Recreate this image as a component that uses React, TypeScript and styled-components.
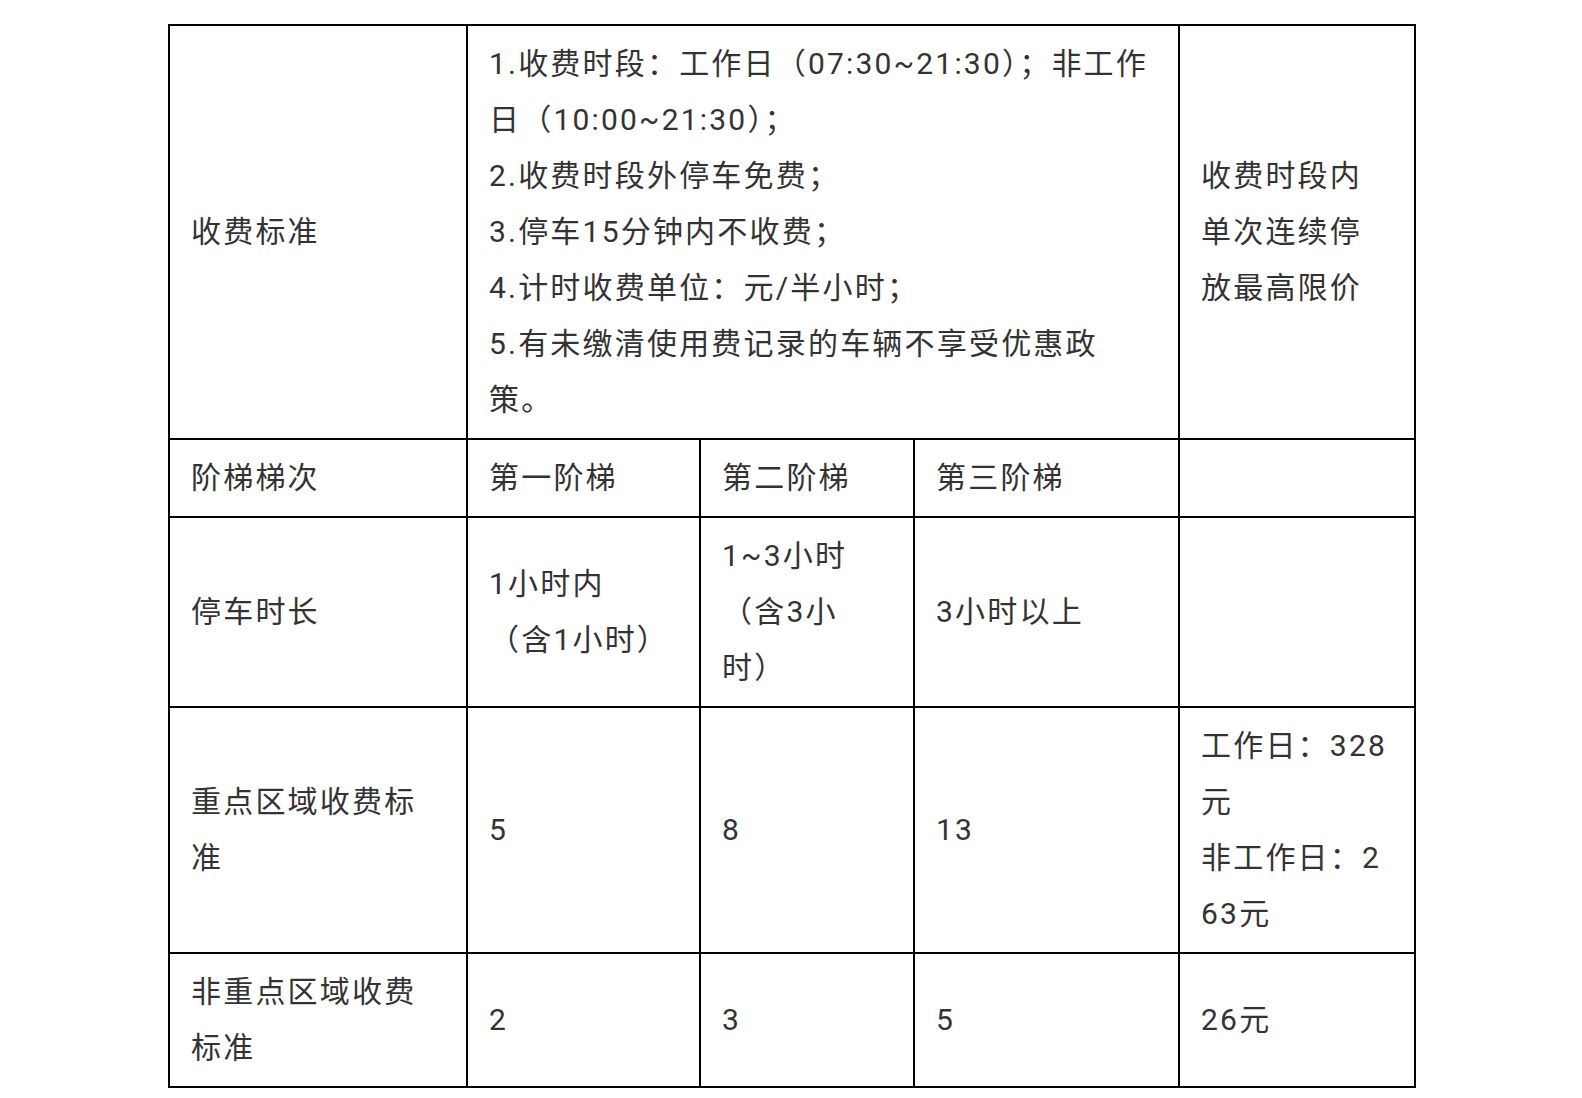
import styled, { createGlobalStyle } from 'styled-components';

const GlobalStyle = createGlobalStyle`
  html, body {
    margin: 0;
    padding: 0;
    background: #ffffff;
  }
  body {
    font-family: Roboto, "Noto Sans CJK SC", sans-serif;
    color: #333333;
  }
`;

const Page = styled.div`
  padding: 24px 0 20px 168px;
`;

const FeeTable = styled.table`
  border-collapse: collapse;
  table-layout: fixed;
  font-size: 30px;
  line-height: 56px;
  letter-spacing: 2.2px;
  word-break: break-all;
`;

const Cell = styled.td`
  border: 2px solid #000000;
  padding: 10px 22px 10px 21px;
  vertical-align: middle;
  text-align: left;
  color: #333333;
`;

const Item = styled.div`
  display: block;
`;

const RULES = [
  '1.收费时段：工作日（07:30~21:30）；非工作日（10:00~21:30）；',
  '2.收费时段外停车免费；',
  '3.停车15分钟内不收费；',
  '4.计时收费单位：元/半小时；',
  '5.有未缴清使用费记录的车辆不享受优惠政策。',
];

const COLUMNS = [298, 233, 214, 265, 236];

export default function App() {
  return (
    <>
      <GlobalStyle />
      <Page>
        <FeeTable style={{ width: COLUMNS.reduce((a, b) => a + b, 0) }}>
          <colgroup>
            {COLUMNS.map((w, i) => (
              <col key={i} style={{ width: w }} />
            ))}
          </colgroup>
          <tbody>
            <tr>
              <Cell>收费标准</Cell>
              <Cell colSpan={3}>
                {RULES.map((r, i) => (
                  <Item key={i}>{r}</Item>
                ))}
              </Cell>
              <Cell>收费时段内单次连续停放最高限价</Cell>
            </tr>
            <tr>
              <Cell>阶梯梯次</Cell>
              <Cell>第一阶梯</Cell>
              <Cell>第二阶梯</Cell>
              <Cell>第三阶梯</Cell>
              <Cell />
            </tr>
            <tr>
              <Cell>停车时长</Cell>
              <Cell>
                1小时内
                <br />
                （含1小时）
              </Cell>
              <Cell>
                1~3小时
                <br />
                （含3小
                <br />
                时）
              </Cell>
              <Cell>3小时以上</Cell>
              <Cell />
            </tr>
            <tr>
              <Cell>重点区域收费标准</Cell>
              <Cell>5</Cell>
              <Cell>8</Cell>
              <Cell>13</Cell>
              <Cell>
                工作日：328元
                <br />
                非工作日：263元
              </Cell>
            </tr>
            <tr>
              <Cell>非重点区域收费标准</Cell>
              <Cell>2</Cell>
              <Cell>3</Cell>
              <Cell>5</Cell>
              <Cell>26元</Cell>
            </tr>
          </tbody>
        </FeeTable>
      </Page>
    </>
  );
}
